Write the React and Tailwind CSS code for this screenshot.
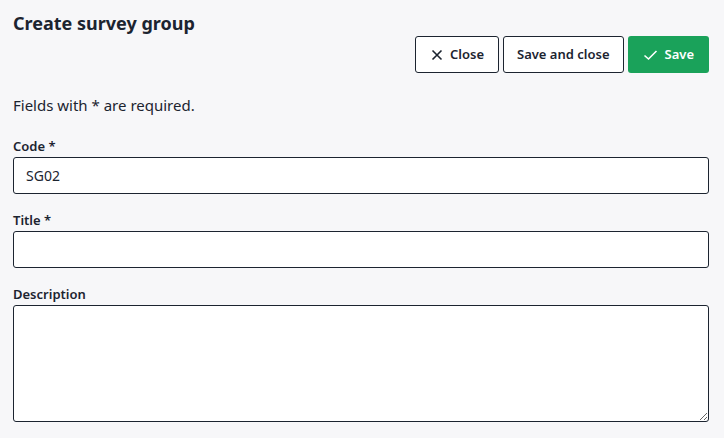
import React, { useState } from 'react';

export default function App() {
  const [code, setCode] = useState('SG02');
  const [title, setTitle] = useState('');
  const [description, setDescription] = useState('');

  return (
    <div className="min-h-[438px] bg-[#f7f7f9] px-[13px] pt-[11px] text-[#1c2430]" style={{ fontFamily: '"Noto Sans", "Open Sans", sans-serif' }}>
      <h1 className="text-[18px] font-bold leading-[24px] w-[696px]">Create survey group</h1>

      <div className="flex justify-end gap-1 w-[696px] mt-[1px]">
        <button className="h-[37px] px-[14px] flex items-center gap-[6px] bg-white border border-[#1c2430] rounded-[3px] text-[13px] font-semibold">
          <svg width="14" height="14" viewBox="0 0 14 14" fill="none" stroke="currentColor" strokeWidth="1.6">
            <path d="M2.5 2.5 L11.5 11.5 M11.5 2.5 L2.5 11.5" />
          </svg>
          Close
        </button>
        <button className="h-[37px] px-[13px] bg-white border border-[#1c2430] rounded-[3px] text-[13px] font-semibold">
          Save and close
        </button>
        <button className="h-[37px] px-[15px] flex items-center gap-[7px] bg-[#1aa25a] text-white rounded-[3px] text-[13px] font-semibold">
          <svg width="15" height="14" viewBox="0 0 15 14" fill="none" stroke="currentColor" strokeWidth="1.6">
            <path d="M1.5 7.5 L5.5 11 L13.5 3" />
          </svg>
          Save
        </button>
      </div>

      <p className="mt-[21px] text-[15px] leading-[22px]">Fields with * are required.</p>

      <div className="w-[696px] mt-[21px] flex flex-col">
        <label className="text-[13px] font-semibold leading-[18px]">Code *</label>
        <input
          value={code}
          onChange={(e) => setCode(e.target.value)}
          className="mt-[2px] h-[37px] px-3 bg-white border border-[#1c2430] rounded-[3px] text-[14px] outline-none"
        />

        <label className="mt-[17px] text-[13px] font-semibold leading-[18px]">Title *</label>
        <input
          value={title}
          onChange={(e) => setTitle(e.target.value)}
          className="mt-[2px] h-[37px] px-3 bg-white border border-[#1c2430] rounded-[3px] text-[14px] outline-none"
        />

        <label className="mt-[17px] text-[13px] font-semibold leading-[18px]">Description</label>
        <textarea
          value={description}
          onChange={(e) => setDescription(e.target.value)}
          className="mt-[2px] h-[117px] px-3 py-2 bg-white border border-[#1c2430] rounded-[3px] text-[14px] outline-none"
        />
      </div>
    </div>
  );
}
